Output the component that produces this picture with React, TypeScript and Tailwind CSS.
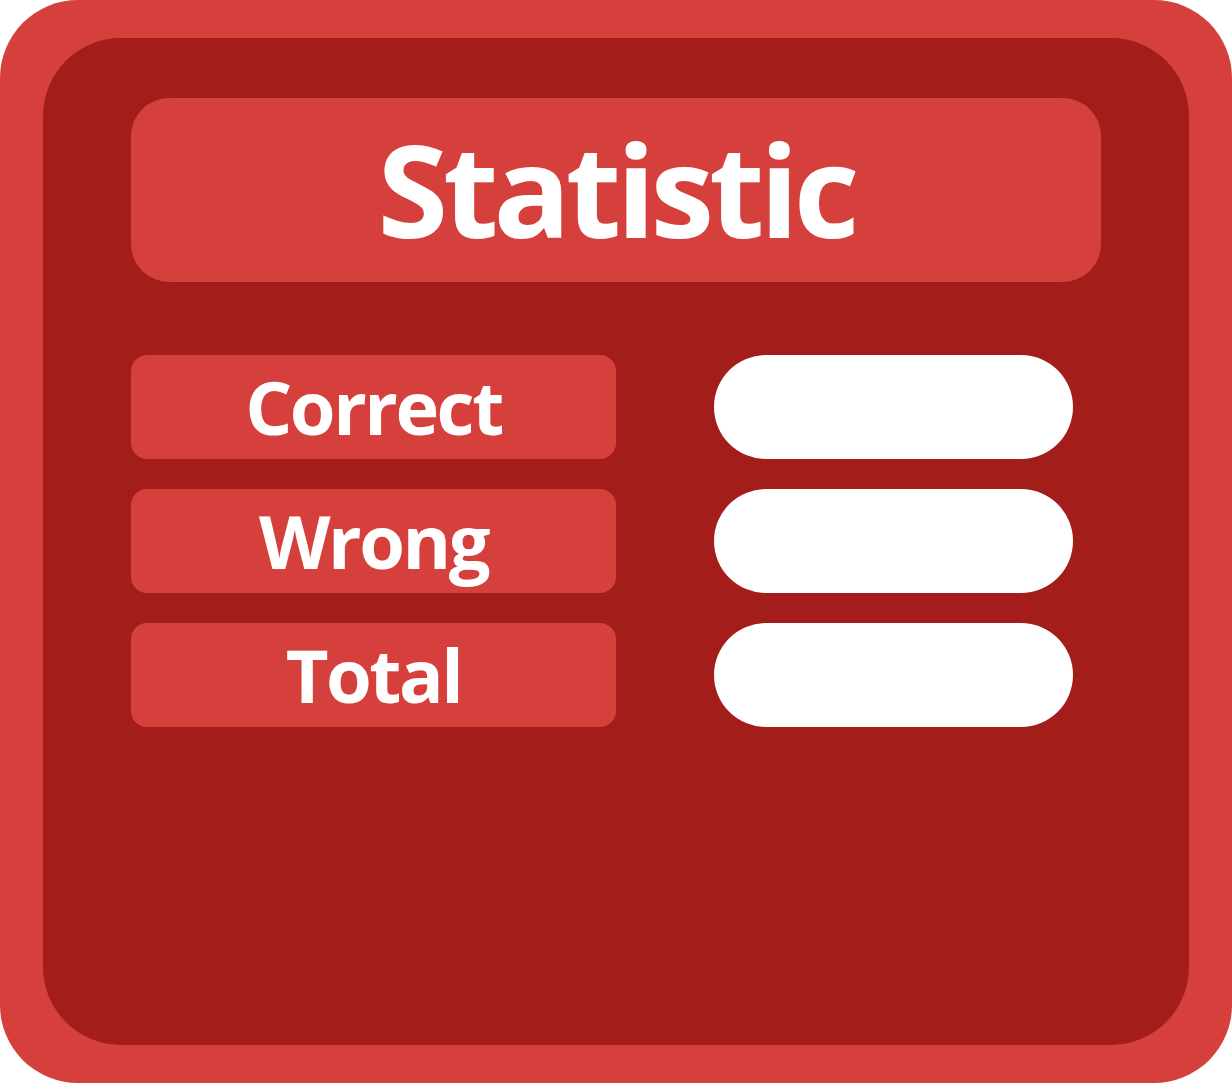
const ROWS = ['Correct', 'Wrong', 'Total'];

export default function App() {
  return (
    <div className="h-[1083px] w-[1232px] bg-white">
      <div className="h-full w-full rounded-[78px] bg-[#d6403c] px-[43px] pb-[38px] pt-[38px]">
        <div className="h-full w-full rounded-[78px] bg-[#a31d1b] pl-[88px] pr-[88px] pt-[60px]">
          <div
            className="flex h-[184px] w-[970px] items-center justify-center rounded-[38px] bg-[#d6403c] text-[128px] font-bold leading-none text-white"
            style={{ fontFamily: '"Open Sans", sans-serif' }}
          >
            <span className="-translate-y-[1px] tracking-[-5px]">Statistic</span>
          </div>
          <div className="mt-[73px] flex flex-col gap-[30px]">
            {ROWS.map((label) => (
              <div key={label} className="flex items-center">
                <div
                  className="flex h-[104px] w-[485px] items-center justify-center rounded-[16px] bg-[#d6403c] text-[74px] font-bold leading-none text-white"
                  style={{ fontFamily: '"Open Sans", sans-serif' }}
                >
                  <span className="tracking-[-2.5px]">{label}</span>
                </div>
                <div className="ml-[98px] h-[104px] w-[359px] rounded-full bg-white" />
              </div>
            ))}
          </div>
        </div>
      </div>
    </div>
  );
}
